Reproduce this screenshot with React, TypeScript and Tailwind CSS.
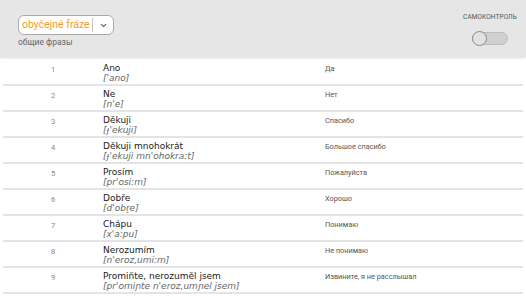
import { useState } from 'react';

const rows = [
  { cz: 'Ano', ph: "['ano]", ru: 'Да' },
  { cz: 'Ne', ph: "[n'e]", ru: 'Нет' },
  { cz: 'Děkuji', ph: "[ɟ'ekuji]", ru: 'Спасибо' },
  { cz: 'Děkuji mnohokrát', ph: "[ɟ'ekuji mn'ohokra:t]", ru: 'Большое спасибо' },
  { cz: 'Prosím', ph: "[pr'osi:m]", ru: 'Пожалуйста' },
  { cz: 'Dobře', ph: "[d'obr̝e]", ru: 'Хорошо' },
  { cz: 'Chápu', ph: "[x'a:pu]", ru: 'Понимаю' },
  { cz: 'Nerozumím', ph: "[n'eroz,umi:m]", ru: 'Не понимаю' },
  { cz: 'Promiňte, nerozuměl jsem', ph: "[pr'omiɲte n'eroz,umɲel jsem]", ru: 'Извините, я не расслышал' },
];

export default function App() {
  const [selfCheck, setSelfCheck] = useState(false);

  return (
    <div className="w-[526px] h-[296px] overflow-hidden bg-white" style={{ fontFamily: 'Roboto, sans-serif' }}>
      {/* шапка */}
      <div className="h-[57px] bg-[#e6e6e6] shadow-[0_1px_2px_rgba(0,0,0,0.15)] flex justify-between px-[18px] relative">
        <div className="pt-[15px]">
          <div className="w-[96px] h-[20px] rounded-[6px] border border-[#a9a9a9] bg-white flex items-center">
            <span className="flex-1 pl-[3px] text-[10.5px] text-[#f39a2b] leading-none">obyčejné fráze</span>
            <span className="w-px h-[14px] bg-[#c4c4c4]" />
            <span className="w-[20px] flex justify-center">
              <svg width="7" height="5" viewBox="0 0 7 5">
                <path d="M1 1.2 L3.5 3.6 L6 1.2" fill="none" stroke="#555" strokeWidth="1.1" />
              </svg>
            </span>
          </div>
          <div className="mt-[3px] text-[8.5px] text-[#666] leading-none">общие фразы</div>
        </div>
        <div className="pt-[14px] flex flex-col items-end mr-[-9px]">
          <div className="text-[6.5px] text-[#555] tracking-[0.1px] leading-none">САМОКОНТРОЛЬ</div>
          <button
            onClick={() => setSelfCheck(!selfCheck)}
            className="mt-[11px] mr-[9px] w-[36px] h-[13px] rounded-full bg-[#d0d0d0] border border-[#bdbdbd] relative"
          >
            <span className="absolute left-[-1px] top-[-2px] w-[15px] h-[15px] rounded-full bg-[#e2e2e2] border border-[#8a8a8a]" />
          </button>
        </div>
      </div>

      {/* список */}
      <div className="pt-[3px]">
        {rows.map((r, i) => (
          <div key={i} className="mx-[3px] h-[26px] border-b-2 border-[#e4e4e4] flex items-start pt-[4px]">
            <div className="w-[100px] text-center text-[7.5px] text-[#888] pt-[2px] leading-none">{i + 1}</div>
            <div className="w-[222px] leading-none" style={{ fontFamily: '"DejaVu Sans", sans-serif' }}>
              <div className="text-[9px] text-[#1a1a1a]">{r.cz}</div>
              <div className="text-[9px] italic text-[#666] mt-[1px]">{r.ph}</div>
            </div>
            <div className="text-[7.3px] text-[#555] pt-[1px] leading-none">{r.ru}</div>
          </div>
        ))}
      </div>
    </div>
  );
}
